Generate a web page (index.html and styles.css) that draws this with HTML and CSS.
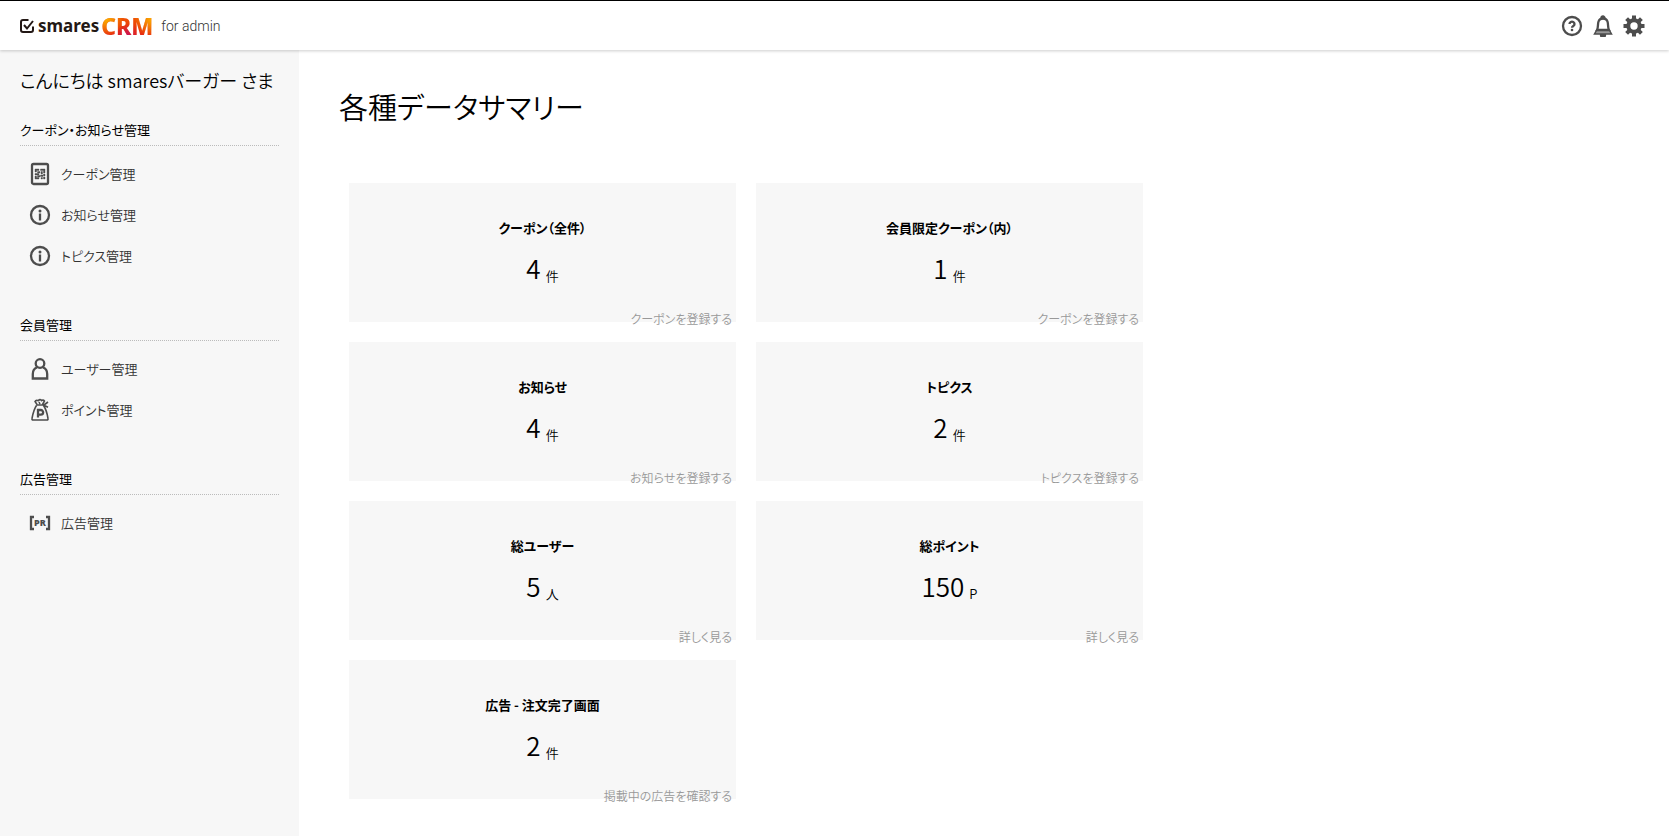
FILE: index.html
```html
<!DOCTYPE html>
<html lang="ja">
<head>
    <meta charset="UTF-8">
    <meta name="viewport" content="width=device-width, initial-scale=1.0">
    <title>smares CRM for admin</title>
    <link rel="stylesheet" href="styles.css">
</head>
<body>
    <header class="header">
        <a href="#" class="logo">
            <svg class="logo-mark" viewBox="0 0 14 14" aria-hidden="true">
                <path d="M8.500 1H3a2 2 0 0 0-2 2v8a2 2 0 0 0 2 2h8a2 2 0 0 0 2-2V7.500"/>
                <path d="M4 6l3 3.500L13 2"/>
            </svg>
            <span class="logo-name">smares</span>
            <span class="logo-crm">CRM</span>
            <span class="logo-sub">for admin</span>
        </a>
        <nav class="header-nav">
            <a href="#" aria-label="ヘルプ">
                <svg viewBox="0 0 22 22">
                    <circle cx="11" cy="11" r="9" class="line"/>
                    <path d="M8.500 9a2.500 2.300 0 1 1 3.800 2c-1 .6-1.300 1-1.300 1.700" class="line"/>
                    <circle cx="11" cy="15" r="1.300" class="fill"/>
                </svg>
            </a>
            <a href="#" aria-label="通知">
                <svg viewBox="0 0 22 22">
                    <path d="M9 20h4a2 2 0 0 1-4 0zM9.500 3a1.500 1.500 0 0 1 3 0z" class="line"/>
                    <path d="M5 15c1.500-3 .5-5.500 1.500-8.500C7.200 4.300 9 3.500 11 3.500s3.800.8 4.500 3C16.500 9.500 15.500 12 17 15z" class="line"/>
                    <path d="M4.500 15.500h13l2 3.500h-17z" class="base"/>
                </svg>
            </a>
            <a href="#" aria-label="設定">
                <svg viewBox="0 0 22 22">
                    <circle cx="11" cy="11" r="5.700" class="ring"/>
                    <path d="M11 .5v4M11 17.500v4M.5 11h4M17.500 11h4M3.600 3.600l2.800 2.800M15.600 15.600l2.800 2.800M3.600 18.400l2.800-2.800M15.600 6.400l2.800-2.800" class="teeth"/>
                </svg>
            </a>
        </nav>
    </header>

    <div class="wrapper">
        <aside class="sidebar">
            <p class="greeting">こんにちは smaresバーガー さま</p>

            <section class="menu">
                <h2>クーポン・お知らせ管理</h2>
                <ul>
                    <li><a href="#">
                        <svg viewBox="0 0 22 24">
                            <rect x="3" y="2" width="16" height="20" rx="1.500" class="line"/>
                            <path d="M6 7h4v1.500H7.500V10H6zM11.500 7H16v4h-1.500V8.500h-3zM8.500 9.500H11V11H8.500zM12 9.500h1.500V12H12zM6 11.500h4V13H6zM6 14h1.500v1.500H10V17H6zM8.500 13.500H11V15H8.500zM11.500 13H14v1.500h-2.500zM14.500 12H16v2h-1.500zM12 15.500h1.500V17H12zM14.500 15H16v2h-1.500z" class="qr"/>
                        </svg>
                        クーポン管理
                    </a></li>
                    <li><a href="#">
                        <svg viewBox="0 0 22 24">
                            <circle cx="11" cy="12" r="9" class="line"/>
                            <circle cx="11" cy="8" r="1.500" class="fill"/>
                            <path d="M11 10.500v7" class="line"/>
                        </svg>
                        お知らせ管理
                    </a></li>
                    <li><a href="#">
                        <svg viewBox="0 0 22 24">
                            <circle cx="11" cy="12" r="9" class="line"/>
                            <circle cx="11" cy="8" r="1.500" class="fill"/>
                            <path d="M11 10.500v7" class="line"/>
                        </svg>
                        トピクス管理
                    </a></li>
                </ul>
            </section>

            <section class="menu">
                <h2>会員管理</h2>
                <ul>
                    <li><a href="#">
                        <svg viewBox="0 0 22 24">
                            <circle cx="11" cy="6.500" r="4.300" class="line"/>
                            <path d="M8 10.500c-3 1-4.200 3.500-4.200 6.500v4.500h14.400V17c0-3-1.200-5.500-4.200-6.500" class="line"/>
                        </svg>
                        ユーザー管理
                    </a></li>
                    <li><a href="#">
                        <svg viewBox="0 0 22 24">
                            <path d="M8 6.500L6 3.500c1-2 2.500-1 3.300-.8C10.500 1 12 1.500 12.500 2.500c1-.7 2.500-.5 3 .5L13.500 6.500M10 4l1 2M7.500 7h7.500M7.500 7.500C5 11 4 15 3 20.500c-.3 1 .3 1.500 1.200 1.500h13.600c.9 0 1.500-.5 1.200-1.500-.8-5-2-9.500-4.500-13M15 7l4-3M15.500 7.500l3.500 1.800" class="thin"/>
                            <path d="M9 19.500V12h2.800a2.300 2.300 0 0 1 0 4.700H9" class="line"/>
                        </svg>
                        ポイント管理
                    </a></li>
                </ul>
            </section>

            <section class="menu">
                <h2>広告管理</h2>
                <ul>
                    <li><a href="#">
                        <svg viewBox="0 0 22 24">
                            <path d="M5 6H2v12h3M17 6h3v12h-3" class="line"/>
                            <text x="11" y="15" class="pr">PR</text>
                        </svg>
                        広告管理
                    </a></li>
                </ul>
            </section>
        </aside>

        <main class="main">
            <h1>各種データサマリー</h1>
            <div class="cards">
                <section class="card">
                    <h3>クーポン（全件）</h3>
                    <p class="count">4<span>件</span></p>
                    <a href="#">クーポンを登録する</a>
                </section>
                <section class="card">
                    <h3>会員限定クーポン（内）</h3>
                    <p class="count">1<span>件</span></p>
                    <a href="#">クーポンを登録する</a>
                </section>
                <section class="card">
                    <h3>お知らせ</h3>
                    <p class="count">4<span>件</span></p>
                    <a href="#">お知らせを登録する</a>
                </section>
                <section class="card">
                    <h3>トピクス</h3>
                    <p class="count">2<span>件</span></p>
                    <a href="#">トピクスを登録する</a>
                </section>
                <section class="card">
                    <h3>総ユーザー</h3>
                    <p class="count">5<span>人</span></p>
                    <a href="#">詳しく見る</a>
                </section>
                <section class="card">
                    <h3>総ポイント</h3>
                    <p class="count">150<span>P</span></p>
                    <a href="#">詳しく見る</a>
                </section>
                <section class="card">
                    <h3>広告 - 注文完了画面</h3>
                    <p class="count">2<span>件</span></p>
                    <a href="#">掲載中の広告を確認する</a>
                </section>
            </div>
        </main>
    </div>
</body>
</html>
```
FILE: styles.css
```css
* {
    margin: 0;
    padding: 0;
    box-sizing: border-box;
}

body {
    display: flex;
    flex-direction: column;
    min-height: 100vh;
    font-family: "Noto Sans CJK JP", sans-serif;
    font-size: 13px;
    font-weight: 350;
    font-feature-settings: "palt";
    line-height: 20px;
    color: #000;
    background: #fff;
}

a {
    color: #333;
    text-decoration: none;
}

ul {
    list-style: none;
}

/* Header */
.header {
    display: flex;
    justify-content: space-between;
    align-items: center;
    height: 50px;
    padding: 0 24px 0 20px;
    border-top: 1px solid #000;
    background: #fff;
    box-shadow: 0 1px 3px rgba(0, 0, 0, 0.2);
    z-index: 1;
}

.logo {
    display: flex;
    align-items: center;
}

.logo-mark {
    width: 14px;
    height: 14px;
    margin-right: 4px;
    fill: none;
    stroke: #231815;
    stroke-width: 2;
}

.logo-name {
    font-family: "Noto Sans", sans-serif;
    font-size: 17px;
    font-weight: 700;
    color: #231815;
}

.logo-crm {
    margin-left: 2px;
    font-family: "Noto Sans", sans-serif;
    font-size: 23px;
    font-weight: 800;
    line-height: 24px;
    background:
        radial-gradient(circle at 10% 20%, #fbb000, transparent 35%),
        radial-gradient(circle at 100% 20%, #fbb000, transparent 35%),
        radial-gradient(circle at 50% 90%, #c8145a, transparent 35%),
        linear-gradient(#f05a00, #e62014);
    background-clip: text;
    -webkit-background-clip: text;
    color: transparent;
}

.logo-sub {
    margin-left: 8px;
    font-family: Roboto, sans-serif;
    font-size: 14px;
}

.header-nav {
    display: flex;
    gap: 9px;
}

.header-nav svg {
    display: block;
    width: 22px;
    height: 22px;
}

/* Icons */
svg .line,
svg .thin {
    fill: none;
    stroke: #4d4d4d;
    stroke-width: 2.3;
}

svg .thin {
    stroke-width: 1.6;
}

svg .fill {
    fill: #4d4d4d;
}

svg .qr {
    fill: #4d4d4d;
    stroke: #4d4d4d;
    stroke-width: 0.4;
}

svg .base {
    fill: #999;
    stroke: #4d4d4d;
    stroke-width: 1.5;
}

svg .ring {
    fill: none;
    stroke: #4d4d4d;
    stroke-width: 4;
}

svg .teeth {
    stroke: #4d4d4d;
    stroke-width: 4;
}

svg .pr {
    font-family: "Noto Sans", sans-serif;
    font-size: 9px;
    font-weight: 900;
    text-anchor: middle;
    fill: #4d4d4d;
}

/* Layout */
.wrapper {
    display: flex;
    flex: 1;
}

.sidebar {
    width: 299px;
    padding: 15px 20px;
    background: #f7f7f7;
}

.greeting {
    font-size: 18px;
    line-height: 30px;
    margin-bottom: 25px;
    white-space: nowrap;
}

.menu {
    margin-bottom: 39px;
}

.menu h2 {
    padding-bottom: 5px;
    margin-bottom: 7px;
    border-bottom: 1px dotted #bbb;
    font-size: 13px;
    font-weight: 400;
}

.menu a {
    display: flex;
    align-items: center;
    gap: 10px;
    height: 41px;
    padding-left: 9px;
}

.menu svg {
    width: 22px;
    height: 24px;
}

.main {
    flex: 1;
    padding: 36px 40px;
}

.main h1 {
    margin-bottom: 47px;
    font-size: 29px;
    font-weight: 350;
    line-height: 40px;
}

/* Summary cards */
.cards {
    display: flex;
    flex-wrap: wrap;
    max-width: 1290px;
}

.card {
    position: relative;
    width: 30%;
    height: 139px;
    margin: 10px;
    padding-top: 35px;
    background: #f7f7f7;
    text-align: center;
}

/* two cards per row */
.card:nth-child(even) {
    margin-right: 30%;
}

.card h3 {
    font-size: 13px;
    font-weight: 700;
}

.count {
    margin-top: 10px;
    font-size: 26px;
    line-height: 40px;
}

.count span {
    margin-left: 5px;
    font-size: 13px;
    vertical-align: -2px;
}

/* link hangs over the bottom edge of the card */
.card a {
    position: absolute;
    right: 4px;
    bottom: -7px;
    font-size: 12px;
    color: #999;
}
```
